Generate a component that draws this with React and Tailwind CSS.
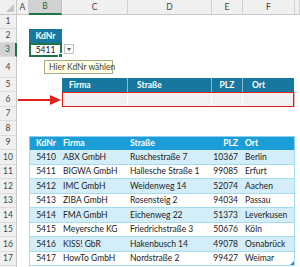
import React from "react";

const customers = [
  ["5410", "ABX GmbH", "Ruschestraße 7", "10367", "Berlin"],
  ["5411", "BIGWA GmbH", "Hallesche Straße 1", "99085", "Erfurt"],
  ["5412", "IMC GmbH", "Weidenweg 14", "52074", "Aachen"],
  ["5413", "ZIBA GmbH", "Rosensteig 2", "94034", "Passau"],
  ["5414", "FMA GmbH", "Eichenweg 22", "51373", "Leverkusen"],
  ["5415", "Meyersche KG", "Friedrichstraße 3", "50676", "Köln"],
  ["5416", "KISS! GbR", "Hakenbusch 14", "49078", "Osnabrück"],
  ["5417", "HowTo GmbH", "Nordstraße 2", "99427", "Weimar"],
];

// row heights of the sheet (row number -> px class)
const heights = {
  1: "h-[14px]", 2: "h-[14px]", 3: "h-[14px]", 4: "h-[21px]", 5: "h-[14px]", 6: "h-[15px]",
  7: "h-[14px]", 8: "h-[15px]", 9: "h-[14px]", 10: "h-[15px]", 11: "h-[14px]", 12: "h-[15px]",
  13: "h-[14px]", 14: "h-[15px]", 15: "h-[14px]", 16: "h-[15px]", 17: "h-[14px]", 18: "h-[14px]",
};

function RowHead({ n, selected }) {
  return (
    <div
      className={
        "w-[17px] shrink-0 flex items-center justify-center border-b border-[#dcdcdc] " +
        (selected
          ? "bg-[#d2d2d2] text-[#1e6b41] border-r-2 border-r-[#217346]"
          : "bg-[#f0f0f0] text-[#444] border-r border-r-[#c8c8c8]")
      }
    >
      {n}
    </div>
  );
}

function Row({ n, selected, className = "", children }) {
  return (
    <div className={`flex ${heights[n]} ${className}`}>
      <RowHead n={n} selected={selected} />
      {children}
    </div>
  );
}

function ColHeaders() {
  const cell = "flex items-center justify-center bg-[#f0f0f0] text-[#444] border-r border-[#d0d0d0] border-b border-b-[#c8c8c8]";
  return (
    <div className="flex h-[15px]">
      <div className="relative w-[17px] bg-[#f0f0f0] border-r border-b border-[#c8c8c8]">
        <div className="absolute right-[2px] bottom-[2px] w-0 h-0 border-l-[8px] border-l-transparent border-b-[8px] border-b-[#c4c4c4]" />
      </div>
      <div className={`w-[12px] ${cell}`}>A</div>
      <div className="w-[33px] flex items-center justify-center bg-[#d2d2d2] text-[#1e6b41] border-r border-[#c0c0c0] border-b-2 border-b-[#217346]">B</div>
      <div className={`w-[66px] ${cell}`}>C</div>
      <div className={`w-[84px] ${cell}`}>D</div>
      <div className={`w-[31px] ${cell}`}>E</div>
      <div className={`w-[52px] ${cell}`}>F</div>
      <div className={`w-[5px] ${cell}`} />
    </div>
  );
}

function Arrow() {
  return (
    <svg width="45" height="15" viewBox="0 0 45 15">
      <line x1="1" y1="8" x2="35" y2="8" stroke="#e1201d" strokeWidth="2" />
      <polygon points="33,3 44,8 33,13" fill="#e1201d" />
    </svg>
  );
}

export default function App() {
  return (
    <div className="w-[300px] h-[267px] overflow-hidden bg-white text-[8.5px] leading-none [font-family:Lato,'Liberation_Sans',sans-serif]">
      <ColHeaders />

      <Row n={1} />

      <Row n={2}>
        <div className="w-[12px]" />
        <div className="w-[33px] flex items-center justify-center bg-[#17779e] text-white font-bold">KdNr</div>
      </Row>

      <Row n={3} selected>
        <div className="w-[12px]" />
        <div className="relative w-[33px] flex items-center justify-center border-2 border-[#217346] text-[#222]">
          5411
          <div className="absolute right-[-3px] bottom-[-3px] w-[5px] h-[5px] bg-[#217346] border border-white" />
        </div>
        <div className="w-[66px] flex items-start pl-[2px] pt-[1px]">
          <div className="w-[10px] h-[10px] flex items-center justify-center bg-[#f8f8f8] border border-[#c2c2c2]">
            <div className="w-0 h-0 border-l-[2.5px] border-r-[2.5px] border-t-[3px] border-l-transparent border-r-transparent border-t-[#555]" />
          </div>
        </div>
      </Row>

      <Row n={4} className="relative">
        <div className="absolute left-[44px] top-[3px] w-[69px] h-[14px] flex items-center pl-[4px] bg-[#ffffe1] border border-[#a9a98c] text-[#444] whitespace-nowrap">
          Hier KdNr wählen
        </div>
      </Row>

      <Row n={5}>
        <div className="w-[45px]" />
        <div className="w-[66px] flex items-center pl-[7px] bg-[#17779e] text-white font-bold border-r border-white/50">Firma</div>
        <div className="w-[84px] flex items-center pl-[9px] bg-[#17779e] text-white font-bold border-r border-white/50">Straße</div>
        <div className="w-[31px] flex items-center justify-center bg-[#17779e] text-white font-bold border-r border-white/50">PLZ</div>
        <div className="w-[51px] flex items-center pl-[9px] bg-[#17779e] text-white font-bold">Ort</div>
      </Row>

      <Row n={6}>
        <div className="w-[45px] flex items-center">
          <Arrow />
        </div>
        <div className="flex w-[232px] bg-[#f1f1f1] border border-[#e1201d] shadow-[1px_0_0_#f4b0b0]">
          <div className="w-[65px] border-r border-white" />
          <div className="w-[84px] border-r border-white" />
          <div className="w-[31px] border-r border-white" />
          <div className="flex-1" />
        </div>
      </Row>

      <Row n={7} />
      <Row n={8} />

      <Row n={9}>
        <div className="w-[12px]" />
        <div className="flex bg-[#1b9ed8] text-white font-bold border border-b-0 border-[#8ccfee]">
          <div className="w-[32px] flex items-center justify-center">KdNr</div>
          <div className="w-[66px] flex items-center pl-[1px]">Firma</div>
          <div className="w-[84px] flex items-center pl-[2px]">Straße</div>
          <div className="w-[31px] flex items-center justify-end pr-[5px]">PLZ</div>
          <div className="w-[51px] flex items-center pl-[2px]">Ort</div>
        </div>
      </Row>

      {customers.map((c, i) => (
        <Row n={10 + i} key={c[0]}>
          <div className="w-[12px]" />
          <div
            className={
              "relative flex text-[#222] border-x border-b border-[#a6dbf2] " +
              (i % 2 === 0 ? "bg-[#d4eef9]" : "bg-white")
            }
          >
            <div className="w-[32px] flex items-center justify-center">{c[0]}</div>
            <div className="w-[66px] flex items-center pl-[1px] whitespace-nowrap">{c[1]}</div>
            <div className="w-[84px] flex items-center pl-[2px] whitespace-nowrap">{c[2]}</div>
            <div className="w-[31px] flex items-center justify-end pr-[5px]">{c[3]}</div>
            <div className="w-[51px] flex items-center pl-[2px]">{c[4]}</div>
            {i === customers.length - 1 && (
              <div className="absolute right-0 bottom-0 w-0 h-0 border-l-[4px] border-l-transparent border-b-[4px] border-b-[#2f8fc4]" />
            )}
          </div>
        </Row>
      ))}

      <Row n={18} />
    </div>
  );
}
